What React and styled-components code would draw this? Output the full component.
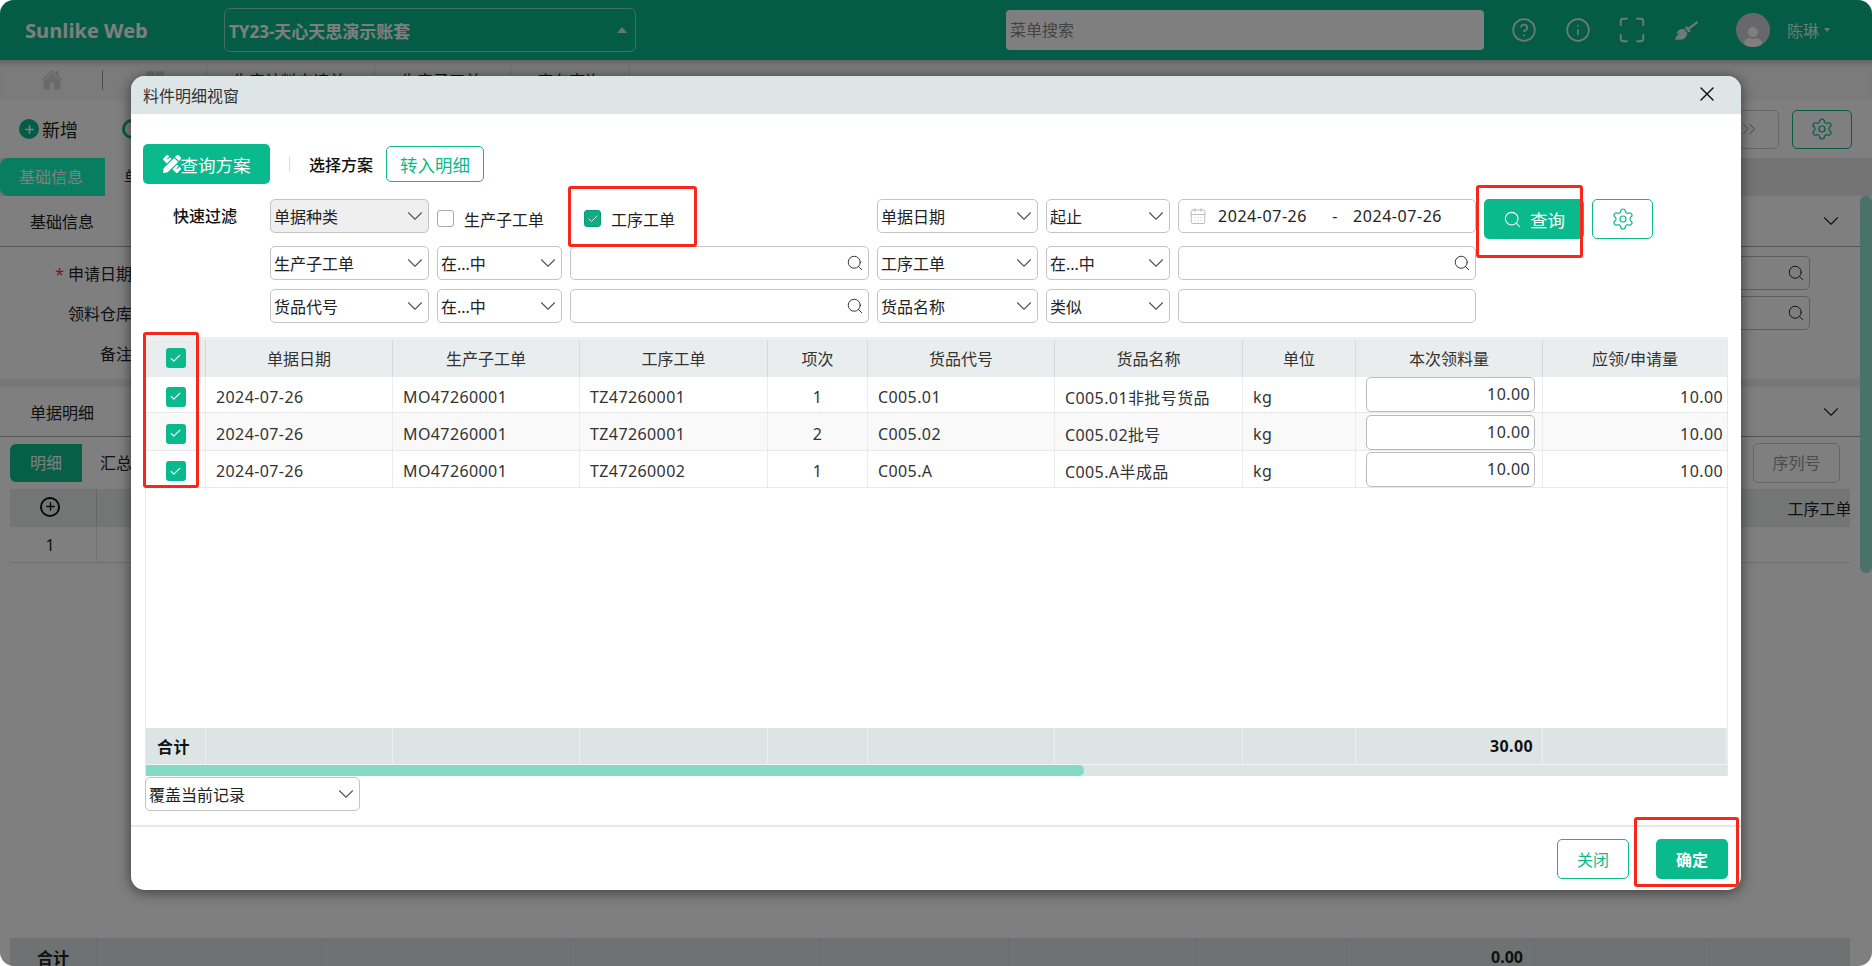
import React from 'react';
import styled, { createGlobalStyle } from 'styled-components';
import {
    CalendarDays,
    Check,
    ChevronDown,
    ChevronsRight,
    CircleHelp,
    Info,
    Maximize,
    Plus,
    Search,
    Settings,
    X,
} from 'lucide-react';
import { FaBroom, FaPencilRuler, FaUser } from 'react-icons/fa';
import { IoGrid, IoHome } from 'react-icons/io5';

const GREEN = '#0ab98c';

const GlobalStyle = createGlobalStyle`
    html, body {
        margin: 0;
        padding: 0;
        background: #fff;
        overflow: hidden;
    }
    * {
        box-sizing: border-box;
    }
    body {
        font-family: "Noto Sans", "Noto Sans CJK SC", sans-serif;
        font-size: 16px;
        color: #222;
    }
`;

const Screen = styled.div`
    position: relative;
    width: 1872px;
    height: 966px;
    overflow: hidden;
    border-radius: 14px;
    background: #fff;
`;

const Page = styled.div`
    display: flex;
    flex-direction: column;
    height: 100%;
`;

const Backdrop = styled.div`
    position: absolute;
    inset: 0;
    background: rgba(0, 0, 0, 0.5);
`;

/* top bar */
const TopBar = styled.header`
    display: flex;
    align-items: center;
    flex: none;
    height: 60px;
    background: ${GREEN};
    color: #fff;
`;

const Logo = styled.div`
    width: 224px;
    padding-left: 25px;
    font-family: "Open Sans", sans-serif;
    font-size: 20px;
    font-weight: 700;
`;

const AccountSelect = styled.div`
    display: flex;
    align-items: center;
    justify-content: space-between;
    width: 412px;
    height: 44px;
    padding: 0 8px 0 4px;
    border: 1px solid rgba(255, 255, 255, 0.5);
    border-radius: 6px;
    font-size: 17px;
    font-weight: 700;
`;

const Caret = styled.span`
    width: 0;
    height: 0;
    border-left: 5px solid transparent;
    border-right: 5px solid transparent;
    border-bottom: 6px solid rgba(255, 255, 255, 0.8);
`;

const MenuSearch = styled.div`
    width: 478px;
    height: 40px;
    margin-left: 370px;
    padding-left: 4px;
    border-radius: 4px;
    background: #fff;
    color: #888;
    line-height: 40px;
`;

const TopIcons = styled.div`
    display: flex;
    align-items: center;
    gap: 30px;
    margin-left: 28px;
`;

const TopIcon = styled.span`
    display: flex;
    justify-content: center;
    width: 24px;
    color: rgba(255, 255, 255, 0.85);
    svg {
        flex: none;
    }
`;

const Avatar = styled.span`
    display: flex;
    align-items: flex-end;
    justify-content: center;
    width: 34px;
    height: 34px;
    margin-left: 38px;
    overflow: hidden;
    border-radius: 50%;
    background: #d0d0d8;
    color: #fff;
    font-size: 20px;
`;

const UserName = styled.span`
    margin-left: 17px;
    color: rgba(255, 255, 255, 0.85);
`;

const UserCaret = styled.span`
    width: 0;
    height: 0;
    margin-left: 5px;
    border-left: 3px solid transparent;
    border-right: 3px solid transparent;
    border-top: 4px solid rgba(255, 255, 255, 0.85);
`;

/* page tabs */
const NavTabs = styled.nav`
    display: flex;
    flex: none;
    height: 40px;
    background: #f6f6f6;
    box-shadow: inset 0 6px 6px -4px rgba(0, 0, 0, 0.25);
`;

const HomeCell = styled.div`
    position: relative;
    display: flex;
    align-items: center;
    justify-content: center;
    width: 103px;
    color: #d4d4d4;
    font-size: 22px;
    &::after {
        content: '';
        position: absolute;
        right: 0;
        top: 10px;
        bottom: 10px;
        width: 1px;
        background: #999;
    }
`;

const GridCell = styled.div`
    display: flex;
    align-items: center;
    justify-content: center;
    width: 103px;
    color: #d4d4d4;
    font-size: 20px;
`;

const NavTab = styled.div`
    display: flex;
    align-items: center;
    width: ${(p) => p.$w}px;
    padding-left: ${(p) => p.$pad}px;
    border-left: 1px solid #ddd;
    white-space: nowrap;
    overflow: hidden;
    &:last-child {
        border-right: 1px solid #ddd;
    }
`;

const NavDot = styled.span`
    width: 6px;
    height: 6px;
    margin-right: 10px;
    border-radius: 50%;
    background: ${GREEN};
`;

/* page toolbar */
const PageToolbar = styled.div`
    display: flex;
    align-items: center;
    flex: none;
    height: 58px;
    padding: 0 20px 0 19px;
    background: #fff;
`;

const ToolAction = styled.div`
    display: flex;
    align-items: center;
    gap: 3px;
    width: 103px;
    font-size: 18px;
`;

const RoundPlus = styled.span`
    display: flex;
    align-items: center;
    justify-content: center;
    width: 20px;
    height: 20px;
    border-radius: 50%;
    background: ${GREEN};
    color: #fff;
`;

const RingIcon = styled.span`
    width: 20px;
    height: 20px;
    border: 3px solid ${GREEN};
    border-radius: 50%;
`;

const ToolSpacer = styled.div`
    flex: 1;
`;

const GhostButton = styled.div`
    display: flex;
    align-items: center;
    justify-content: center;
    width: 60px;
    height: 39px;
    margin-left: 13px;
    border: 1px solid ${(p) => (p.$active ? GREEN : '#ccc')};
    border-radius: 5px;
    color: ${(p) => (p.$active ? GREEN : '#aaa')};
`;

/* page content */
const PageBody = styled.div`
    position: relative;
    display: flex;
    flex-direction: column;
    flex: 1;
    padding-right: 12px;
    min-height: 0;
`;

const ScrollThumb = styled.div`
    position: absolute;
    right: 0;
    top: 38px;
    width: 12px;
    height: 377px;
    border-radius: 6px;
    background: #94e4cc;
`;

const FormTabs = styled.div`
    display: flex;
    flex: none;
    height: 38px;
    margin-right: -12px;
    background: #e8e8e8;
`;

const FormTab = styled.div`
    width: 105px;
    padding-left: 19px;
    border-radius: ${(p) => (p.$active ? '8px 0 0 8px' : 0)};
    background: ${(p) => (p.$active ? '#12fabf' : '#fff')};
    color: ${(p) => (p.$active ? '#fff' : '#222')};
    line-height: 38px;
`;

const SectionHead = styled.div`
    display: flex;
    align-items: center;
    justify-content: space-between;
    flex: none;
    height: ${(p) => p.$h || 51}px;
    padding: 0 16px 0 30px;
    border-bottom: 1px solid #aaa;
    background: #fff;
`;

const BaseForm = styled.div`
    display: flex;
    flex-direction: column;
    gap: 6px;
    flex: none;
    height: 132px;
    padding: 9px 50px 0 0;
`;

const FormRow = styled.div`
    display: flex;
    align-items: center;
    gap: 8px;
    height: 34px;
`;

const FormLabel = styled.label`
    width: 132px;
    text-align: right;
    white-space: nowrap;
    b {
        margin-right: 4px;
        color: #e33;
        font-weight: 400;
    }
`;

const FormInput = styled.div`
    display: flex;
    align-items: center;
    justify-content: flex-end;
    flex: 1;
    height: 34px;
    padding-right: 4px;
    border: 1px solid #bbb;
    border-radius: 5px;
`;

const GrayBand = styled.div`
    flex: none;
    height: 8px;
    margin-right: -12px;
    background: #eee;
`;

const DetailTabs = styled.div`
    display: flex;
    align-items: center;
    flex: none;
    height: 52px;
    padding: 0 20px 0 10px;
`;

const DetailTab = styled.div`
    width: ${(p) => (p.$active ? 72 : 80)}px;
    height: 38px;
    padding-left: ${(p) => (p.$active ? 20 : 18)}px;
    border-radius: ${(p) => (p.$active ? '6px 0 0 6px' : 0)};
    background: ${(p) => (p.$active ? '#0cbf8e' : '#fff')};
    color: ${(p) => (p.$active ? '#fff' : '#222')};
    line-height: 38px;
`;

const SerialButton = styled.div`
    width: 87px;
    height: 40px;
    margin-left: auto;
    border: 1px solid #ccc;
    border-radius: 5px;
    color: #999;
    line-height: 38px;
    text-align: center;
`;

const BackTable = styled.div`
    display: flex;
    flex-direction: column;
    flex: 1;
    width: 1840px;
    margin: 0 0 -10px 10px;
    overflow: hidden;
`;

const BackRow = styled.div`
    display: grid;
    grid-template-columns: 87px 225px 249px 250px 188px 188px 150px 188px 175px 220px;
    flex: none;
    width: 1920px;
    height: ${(p) => p.$h}px;
    margin-top: ${(p) => (p.$push ? 'auto' : 0)};
    background: ${(p) => p.$bg || '#fff'};
    border-bottom: ${(p) => (p.$line ? '1px solid #ddd' : 0)};
`;

const BackCell = styled.div`
    display: flex;
    align-items: center;
    justify-content: ${(p) => p.$align || 'center'};
    padding: 0 ${(p) => (p.$align ? 11 : 0)}px;
    border-right: 1px solid ${(p) => p.$line || '#e4e4e4'};
    font-weight: ${(p) => (p.$bold ? 700 : 400)};
    white-space: nowrap;
`;

const IndexCell = styled(BackCell)`
    padding-right: 6px;
`;

const CirclePlus = styled.span`
    display: flex;
    align-items: center;
    justify-content: center;
    width: 20px;
    height: 20px;
    margin-top: -3px;
    border: 2px solid #111;
    border-radius: 50%;
    color: #111;
`;

/* modal */
const Modal = styled.section`
    position: absolute;
    left: 131px;
    top: 76px;
    display: flex;
    flex-direction: column;
    width: 1610px;
    height: 814px;
    overflow: hidden;
    border-radius: 14px;
    background: #fff;
    box-shadow: 0 2px 14px rgba(0, 0, 0, 0.55);
`;

const ModalHead = styled.div`
    display: flex;
    align-items: center;
    justify-content: space-between;
    flex: none;
    height: 38px;
    padding: 0 22px 0 12px;
    background: #dde5e6;
    color: #333;
`;

const CloseIcon = styled(X)`
    color: #111;
    margin-top: -2px;
`;

const ModalBody = styled.div`
    display: flex;
    flex-direction: column;
    flex: 1;
    min-height: 0;
    padding: 30px 13px 0 12px;
`;

const PlanBar = styled.div`
    display: flex;
    align-items: center;
    flex: none;
    height: 40px;
`;

const SolidButton = styled.button`
    display: inline-flex;
    align-items: center;
    justify-content: center;
    gap: ${(p) => p.$gap || 0}px;
    flex: none;
    width: ${(p) => p.$w}px;
    height: 40px;
    padding: 0;
    border: 0;
    border-radius: 5px;
    background: ${GREEN};
    color: #fff;
    font: inherit;
    font-size: ${(p) => p.$size || 16}px;
    font-weight: ${(p) => (p.$bold ? 700 : 400)};
`;

const OutlineButton = styled.button`
    display: inline-flex;
    align-items: center;
    justify-content: center;
    flex: none;
    width: ${(p) => p.$w}px;
    height: ${(p) => p.$h || 40}px;
    padding: 0;
    border: 1px solid ${GREEN};
    border-radius: 5px;
    background: #fff;
    color: ${GREEN};
    font: inherit;
    font-size: ${(p) => p.$size || 16}px;
`;

const PlanDivider = styled.span`
    width: 1px;
    height: 16px;
    margin: 0 19px;
    background: #ddd;
`;

const PlanLabel = styled.span`
    margin-right: 13px;
    font-weight: 500;
    color: #111;
`;

const FilterForm = styled.div`
    display: flex;
    flex-direction: column;
    flex: none;
    margin-top: 15px;
`;

const FilterRow = styled.div`
    display: flex;
    align-items: flex-start;
    gap: 8px;
    margin-bottom: ${(p) => p.$mb || 0}px;
`;

const FilterLabel = styled.div`
    width: 119px;
    height: 34px;
    padding-left: 30px;
    line-height: 34px;
    color: #111;
    font-weight: 500;
`;

const FilterSpacer = styled.div`
    width: 119px;
`;

const Select = styled.div`
    display: flex;
    align-items: center;
    justify-content: space-between;
    flex: none;
    width: ${(p) => p.$w}px;
    height: 34px;
    padding: 0 0 0 3px;
    border: 1px solid #c4c4c4;
    border-radius: 5px;
    background: ${(p) => (p.$disabled ? '#efefef' : '#fff')};
    color: #222;
    white-space: nowrap;
`;

const Arrow = styled(ChevronDown)`
    color: #555;
    flex: none;
`;

const CheckGroup = styled.div`
    display: flex;
    align-items: center;
    width: 432px;
    height: 34px;
`;

const CheckItem = styled.label`
    display: flex;
    align-items: center;
    gap: 10px;
    width: ${(p) => p.$w}px;
    padding-top: 5px;
`;

const PlainBox = styled.span`
    display: inline-flex;
    align-items: center;
    justify-content: center;
    width: 17px;
    height: 17px;
    border: 1px solid ${(p) => (p.$on ? '#0a9b76' : '#aaa')};
    border-radius: 3px;
    background: ${(p) => (p.$on ? '#11ab84' : '#fff')};
    color: #fff;
`;

const SearchField = styled.div`
    display: flex;
    align-items: center;
    justify-content: flex-end;
    flex: none;
    width: ${(p) => p.$w}px;
    height: 34px;
    padding-right: 4px;
    border: 1px solid #c4c4c4;
    border-radius: 5px;
    color: #333;
`;

const DateRange = styled.div`
    display: flex;
    align-items: center;
    flex: none;
    width: 298px;
    height: 34px;
    padding-left: 10px;
    border: 1px solid #c4c4c4;
    border-radius: 5px;
    letter-spacing: 0.55px;
    white-space: nowrap;
`;

const DateIcon = styled(CalendarDays)`
    flex: none;
    color: #b5b5b5;
    margin-right: 11px;
`;

const DateDash = styled.span`
    width: 46px;
    padding-left: 10px;
    text-align: center;
`;

/* grid */
const Sheet = styled.div`
    display: flex;
    flex-direction: column;
    flex: none;
    width: 1583px;
    height: 439px;
    margin: 14px 0 0 2px;
    border-top: 3px solid #eef0f0;
    border-left: 1px solid #e8e8e8;
    border-right: 1px solid #e8e8e8;
`;

const SheetRow = styled.div`
    display: grid;
    grid-template-columns: 60px 187px 187px 188px 100px 187px 188px 113px 187px 1fr;
    flex: none;
    height: ${(p) => p.$h}px;
    background: ${(p) => p.$bg || '#fff'};
    border-bottom: 1px solid ${(p) => p.$line || '#e9e9e9'};
`;

const HeadCell = styled.div`
    display: flex;
    align-items: center;
    justify-content: center;
    border-right: 1px solid #d3d8e2;
    color: #333;
    &:last-child {
        border-right: 0;
    }
`;

const BodyCell = styled.div`
    display: flex;
    align-items: center;
    justify-content: ${(p) => p.$align || 'flex-start'};
    padding: 4px ${(p) => (p.$align === 'flex-end' ? 4 : 10)}px 0 10px;
    border-right: 1px solid #ececec;
    color: #333;
    letter-spacing: 0.4px;
    white-space: nowrap;
    &:last-child {
        border-right: 0;
    }
`;

const CheckCell = styled.div`
    display: flex;
    align-items: center;
    justify-content: center;
    padding-top: 4px;
    border-right: 1px solid #ececec;
`;

const QtyCell = styled.div`
    display: flex;
    align-items: flex-end;
    padding: 0 7px 0 10px;
    border-right: 1px solid #ececec;
`;

const QtyInput = styled.div`
    width: 100%;
    height: 35px;
    padding-right: 4px;
    border: 1px solid #bbb;
    border-radius: 5px;
    background: #fff;
    color: #333;
    letter-spacing: 0.4px;
    line-height: 33px;
    text-align: right;
`;

const GreenBox = styled.span`
    display: inline-flex;
    align-items: center;
    justify-content: center;
    width: 20px;
    height: 20px;
    border-radius: 3px;
    background: ${GREEN};
    color: #fff;
`;

const SheetFill = styled.div`
    flex: 1;
`;

const TotalCell = styled.div`
    display: flex;
    align-items: center;
    justify-content: ${(p) => p.$align || 'flex-start'};
    padding: 0 ${(p) => (p.$align ? 9 : 11)}px;
    border-right: 1px solid #eaf0ef;
    font-weight: 700;
    color: #111;
    letter-spacing: 0.4px;
`;

const ScrollTrack = styled.div`
    flex: none;
    height: 11px;
    background: #dce5e4;
`;

const TrackThumb = styled.div`
    width: 938px;
    height: 100%;
    border-radius: 0 5px 5px 0;
    background: #84dac3;
`;

const ModeSelect = styled(Select)`
    margin: 1px 0 0 2px;
    padding: 0 0 0 3px;
`;

const ModalFoot = styled.div`
    display: flex;
    align-items: center;
    justify-content: flex-end;
    gap: 27px;
    flex: none;
    height: 65px;
    padding-right: 13px;
    border-top: 2px solid #e6e6ea;
`;

/* the red marks drawn on top of the screenshot */
const RedMark = styled.div`
    position: absolute;
    left: ${(p) => p.$x - 131}px;
    top: ${(p) => p.$y - 76}px;
    width: ${(p) => p.$w}px;
    height: ${(p) => p.$h}px;
    border: 3px solid #f8271c;
    border-radius: 3px;
    pointer-events: none;
`;

const columns = ['单据日期', '生产子工单', '工序工单', '项次', '货品代号', '货品名称', '单位', '本次领料量', '应领/申请量'];

const rows = [
    { h: 36, item: 1, order: 'TZ47260001', code: 'C005.01', name: 'C005.01非批号货品' },
    { h: 38, item: 2, order: 'TZ47260001', code: 'C005.02', name: 'C005.02批号', bg: '#f9f9f9' },
    { h: 37, item: 1, order: 'TZ47260002', code: 'C005.A', name: 'C005.A半成品' },
];

function Drop({ children, ...rest }) {
    return (
        <Select {...rest}>
            {children}
            <Arrow size={26} strokeWidth={1} />
        </Select>
    );
}

function BackgroundPage() {
    return (
        <Page>
            <TopBar>
                <Logo>Sunlike Web</Logo>
                <AccountSelect>
                    TY23-天心天思演示账套
                    <Caret />
                </AccountSelect>
                <MenuSearch>菜单搜索</MenuSearch>
                <TopIcons>
                    <TopIcon><CircleHelp size={26} strokeWidth={1.6} /></TopIcon>
                    <TopIcon><Info size={26} strokeWidth={1.6} /></TopIcon>
                    <TopIcon><Maximize size={30} strokeWidth={1.5} /></TopIcon>
                    <TopIcon><FaBroom size={23} /></TopIcon>
                </TopIcons>
                <Avatar><FaUser /></Avatar>
                <UserName>陈琳</UserName>
                <UserCaret />
            </TopBar>
            <NavTabs>
                <HomeCell><IoHome /></HomeCell>
                <GridCell><IoGrid /></GridCell>
                <NavTab $w={168} $pad={10}><NavDot />生产计料申请单</NavTab>
                <NavTab $w={136} $pad={26}>生产子工单</NavTab>
                <NavTab $w={120} $pad={26}>库存查询</NavTab>
            </NavTabs>
            <PageToolbar>
                <ToolAction>
                    <RoundPlus><Plus size={13} strokeWidth={3} /></RoundPlus>
                    新增
                </ToolAction>
                <ToolAction><RingIcon /></ToolAction>
                <ToolSpacer />
                <GhostButton><ChevronsRight size={22} strokeWidth={1.1} /></GhostButton>
                <GhostButton $active><Settings size={24} strokeWidth={1.2} /></GhostButton>
            </PageToolbar>
            <PageBody>
                <ScrollThumb />
                <FormTabs>
                    <FormTab $active>基础信息</FormTab>
                    <FormTab>单据明细</FormTab>
                </FormTabs>
                <SectionHead>
                    基础信息
                    <ChevronDown size={26} strokeWidth={1} />
                </SectionHead>
                <BaseForm>
                    <FormRow>
                        <FormLabel><b>*</b>申请日期</FormLabel>
                        <FormInput><Search size={18} strokeWidth={1.3} /></FormInput>
                    </FormRow>
                    <FormRow>
                        <FormLabel>领料仓库</FormLabel>
                        <FormInput><Search size={18} strokeWidth={1.3} /></FormInput>
                    </FormRow>
                    <FormRow>
                        <FormLabel>备注</FormLabel>
                    </FormRow>
                </BaseForm>
                <GrayBand />
                <SectionHead $h={50}>
                    单据明细
                    <ChevronDown size={26} strokeWidth={1} />
                </SectionHead>
                <DetailTabs>
                    <DetailTab $active>明细</DetailTab>
                    <DetailTab>汇总</DetailTab>
                    <SerialButton>序列号</SerialButton>
                </DetailTabs>
                <BackTable>
                    <BackRow $h={38} $bg="#e9eded">
                        <IndexCell $line="#c9cdd8"><CirclePlus><Plus size={13} strokeWidth={2.5} /></CirclePlus></IndexCell>
                        {[...Array(8)].map((_, i) => <BackCell key={i} $line="#c9cdd8" />)}
                        <BackCell>工序工单</BackCell>
                    </BackRow>
                    <BackRow $h={36} $line>
                        <IndexCell>1</IndexCell>
                        {[...Array(9)].map((_, i) => <BackCell key={i} />)}
                    </BackRow>
                    <BackRow $h={38} $bg="#dce5e4" $push>
                        <BackCell $bold $line="#d0dad8">合计</BackCell>
                        {[...Array(6)].map((_, i) => <BackCell key={i} $line="#d0dad8" />)}
                        <BackCell $bold $align="flex-end" $line="#d0dad8">0.00</BackCell>
                        <BackCell $line="#d0dad8" />
                        <BackCell />
                    </BackRow>
                </BackTable>
            </PageBody>
        </Page>
    );
}

function DetailSheet() {
    return (
        <Sheet>
            <SheetRow $h={37} $bg="#e9eded" $line="#e9eded">
                <HeadCell><GreenBox><Check size={13} strokeWidth={2} /></GreenBox></HeadCell>
                {columns.map((c) => <HeadCell key={c}>{c}</HeadCell>)}
            </SheetRow>
            {rows.map((r, i) => (
                <SheetRow key={i} $h={r.h} $bg={r.bg}>
                    <CheckCell><GreenBox><Check size={13} strokeWidth={2} /></GreenBox></CheckCell>
                    <BodyCell>2024-07-26</BodyCell>
                    <BodyCell>MO47260001</BodyCell>
                    <BodyCell>{r.order}</BodyCell>
                    <BodyCell $align="center">{r.item}</BodyCell>
                    <BodyCell>{r.code}</BodyCell>
                    <BodyCell>{r.name}</BodyCell>
                    <BodyCell>kg</BodyCell>
                    <QtyCell><QtyInput>10.00</QtyInput></QtyCell>
                    <BodyCell $align="flex-end">10.00</BodyCell>
                </SheetRow>
            ))}
            <SheetFill />
            <SheetRow $h={37} $bg="#dce5e4" $line="#eef2f1">
                <TotalCell>合计</TotalCell>
                {[...Array(7)].map((_, i) => <TotalCell key={i} />)}
                <TotalCell $align="flex-end">30.00</TotalCell>
                <TotalCell />
            </SheetRow>
            <ScrollTrack><TrackThumb /></ScrollTrack>
        </Sheet>
    );
}

function DetailModal() {
    return (
        <Modal>
            <ModalHead>
                料件明细视窗
                <CloseIcon size={24} strokeWidth={1.4} />
            </ModalHead>
            <ModalBody>
                <PlanBar>
                    <SolidButton $w={127} $size={17.5}><FaPencilRuler size={18} />查询方案</SolidButton>
                    <PlanDivider />
                    <PlanLabel>选择方案</PlanLabel>
                    <OutlineButton $w={98} $h={36} $size={17.5}>转入明细</OutlineButton>
                </PlanBar>
                <FilterForm>
                    <FilterRow $mb={7}>
                        <FilterLabel>快速过滤</FilterLabel>
                        <Drop $w={159} $disabled>单据种类</Drop>
                        <CheckGroup>
                            <CheckItem $w={147}><PlainBox />生产子工单</CheckItem>
                            <CheckItem $w={120}><PlainBox $on><Check size={12} strokeWidth={1.6} /></PlainBox>工序工单</CheckItem>
                        </CheckGroup>
                        <Drop $w={161}>单据日期</Drop>
                        <Drop $w={124}>起止</Drop>
                        <DateRange>
                            <DateIcon size={18} strokeWidth={1.2} />
                            2024-07-26
                            <DateDash>-</DateDash>
                            2024-07-26
                        </DateRange>
                        <SolidButton $w={100} $gap={8} $size={17.5}><Search size={19} strokeWidth={1.3} />查询</SolidButton>
                        <OutlineButton $w={61}><Settings size={24} strokeWidth={1.2} /></OutlineButton>
                    </FilterRow>
                    <FilterRow $mb={9}>
                        <FilterSpacer />
                        <Drop $w={159}>生产子工单</Drop>
                        <Drop $w={125}>在...中</Drop>
                        <SearchField $w={299}><Search size={18} strokeWidth={1.3} /></SearchField>
                        <Drop $w={161}>工序工单</Drop>
                        <Drop $w={124}>在...中</Drop>
                        <SearchField $w={298}><Search size={18} strokeWidth={1.3} /></SearchField>
                    </FilterRow>
                    <FilterRow>
                        <FilterSpacer />
                        <Drop $w={159}>货品代号</Drop>
                        <Drop $w={125}>在...中</Drop>
                        <SearchField $w={299}><Search size={18} strokeWidth={1.3} /></SearchField>
                        <Drop $w={161}>货品名称</Drop>
                        <Drop $w={124}>类似</Drop>
                        <SearchField $w={298} />
                    </FilterRow>
                </FilterForm>
                <DetailSheet />
                <ModeSelect $w={215}>
                    覆盖当前记录
                    <Arrow size={26} strokeWidth={1} />
                </ModeSelect>
            </ModalBody>
            <ModalFoot>
                <OutlineButton $w={72}>关闭</OutlineButton>
                <SolidButton $w={72} $bold>确定</SolidButton>
            </ModalFoot>
            <RedMark $x={568} $y={186} $w={129} $h={61} />
            <RedMark $x={1476} $y={185} $w={107} $h={73} />
            <RedMark $x={143} $y={332} $w={56} $h={156} />
            <RedMark $x={1634} $y={817} $w={105} $h={70} />
        </Modal>
    );
}

export default function App() {
    return (
        <>
            <GlobalStyle />
            <Screen>
                <BackgroundPage />
                <Backdrop />
                <DetailModal />
            </Screen>
        </>
    );
}
